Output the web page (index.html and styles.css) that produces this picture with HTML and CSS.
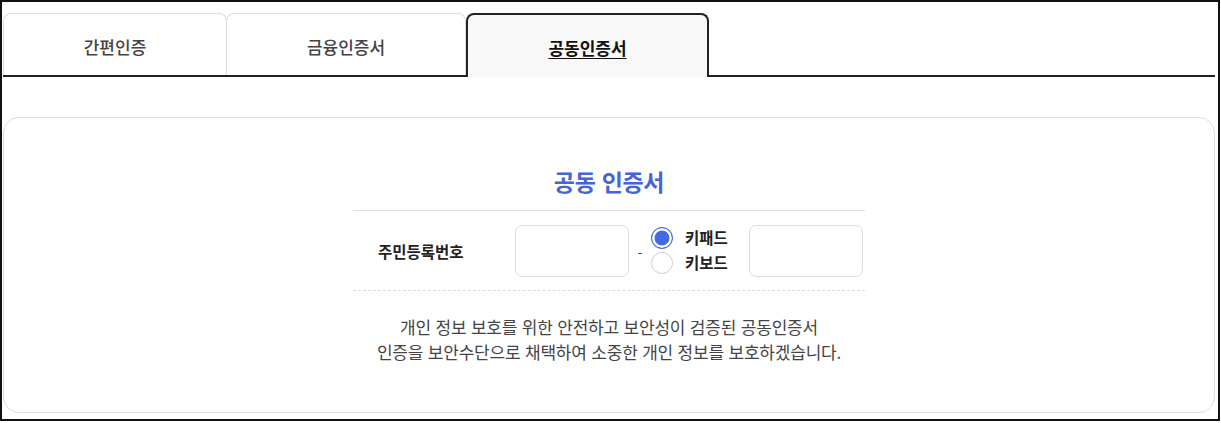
FILE: index.html
```html
<!DOCTYPE html>
<html lang="ko">
<head>
<meta charset="utf-8">
<title>공동인증서</title>
<link rel="stylesheet" href="styles.css">
</head>
<body>
<div class="frame">
  <nav class="tabs">
    <a class="tab tab-first">간편인증</a>
    <a class="tab tab-second">금융인증서</a>
    <a class="tab tab-active">공동인증서</a>
  </nav>
  <section class="card">
    <h2 class="title">공동 인증서</h2>
    <div class="form">
      <div class="row">
        <span class="label">주민등록번호</span>
        <input class="box" type="text" aria-label="주민등록번호 앞자리">
        <span class="dash">-</span>
        <div class="radios">
          <label class="opt"><span class="radio checked"></span><span class="opt-text">키패드</span></label>
          <label class="opt"><span class="radio"></span><span class="opt-text">키보드</span></label>
        </div>
        <input class="box" type="password" aria-label="주민등록번호 뒷자리">
      </div>
    </div>
    <p class="desc">개인 정보 보호를 위한 안전하고 보안성이 검증된 공동인증서<br>인증을 보안수단으로 채택하여 소중한 개인 정보를 보호하겠습니다.</p>
  </section>
</div>
</body>
</html>
```

FILE: styles.css
```css
* { box-sizing: border-box; }
html, body { margin: 0; padding: 0; background: #fff; }
body { font-family: "Noto Sans CJK KR", "Noto Sans", sans-serif; color: #222; }

.frame {
  width: 1220px;
  height: 421px;
  border: 2px solid #111;
  padding: 11px 3px 0 1px;
}

.tabs {
  display: flex;
  height: 64px;
  border-bottom: 2px solid #222;
}
.tab {
  display: flex;
  align-items: center;
  justify-content: center;
  height: 62px;
  padding-top: 4px;
  border: 1px solid #dedede;
  border-bottom: none;
  border-radius: 8px 8px 0 0;
  font-size: 17px;
  font-weight: 500;
  color: #444;
  background: #fff;
}
.tab-first { width: 224px; }
.tab-second { width: 240px; margin-left: -1px; }
.tab-active {
  width: 243px;
  height: 64px;
  border: 2px solid #222;
  border-bottom: none;
  background: #f8f8f8;
  color: #111;
  font-weight: 700;
  text-decoration: underline;
  text-underline-offset: 3px;
  text-decoration-thickness: 1px;
  padding-top: 2px;
}

.card {
  margin-top: 40px;
  height: 296px;
  border: 1px solid #dedede;
  border-radius: 16px;
  padding-top: 48px;
}
.title {
  margin: 0;
  text-align: center;
  font-size: 23px;
  line-height: 30px;
  font-weight: 700;
  color: #4464d9;
  letter-spacing: -0.3px;
}

.form {
  width: 512px;
  margin: 14px auto 0;
  border-top: 1px solid #dedede;
  border-bottom: 1px dashed #dcdcdc;
}
.row {
  display: flex;
  align-items: center;
  height: 79px;
  padding-left: 25px;
}
.label {
  width: 137px;
  font-size: 15.5px;
  font-weight: 700;
  color: #222;
}
.box {
  width: 114px;
  height: 52px;
  border: 1px solid #dedede;
  border-radius: 7px;
  background: #fff;
  outline: none;
  margin: 0;
  padding: 0 8px;
}
.dash {
  width: 22px;
  text-align: center;
  font-size: 13px;
  color: #333;
  line-height: 1;
  padding-top: 3px;
}
.radios {
  width: 98px;
  display: flex;
  flex-direction: column;
  gap: 2px;
}
.opt {
  display: flex;
  align-items: center;
  gap: 12px;
  height: 23px;
}
.radio {
  width: 22px;
  height: 22px;
  border-radius: 50%;
  border: 1px solid #cfcfcf;
  background: #fff;
  flex: none;
}
.radio.checked {
  border: 1.5px solid #4169e1;
  background: #4169e1;
  box-shadow: inset 0 0 0 2.5px #fff;
}
.opt-text {
  font-size: 15.5px;
  font-weight: 700;
  color: #222;
  line-height: 1;
}

.desc {
  margin: 23px 0 0;
  text-align: center;
  font-size: 17px;
  line-height: 25px;
  color: #444;
  letter-spacing: -0.2px;
}
```
